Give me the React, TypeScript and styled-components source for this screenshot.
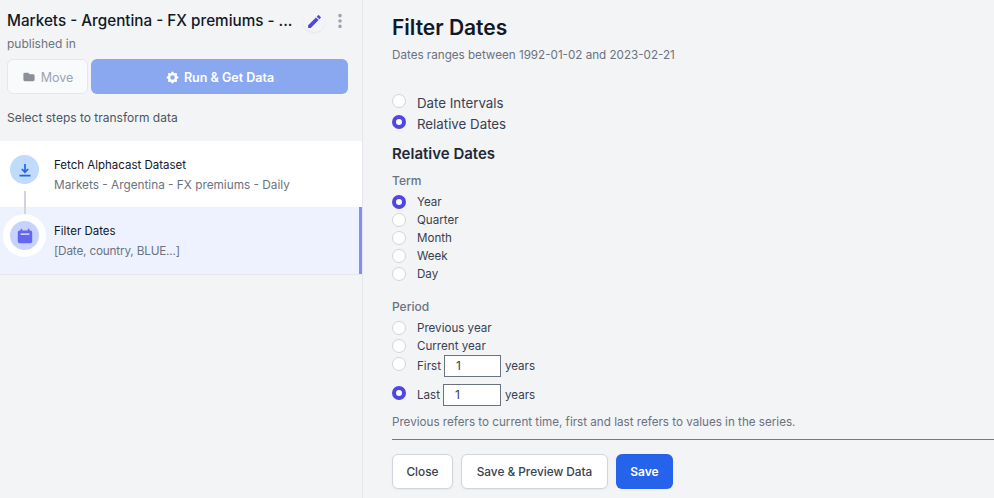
import React from "react"
import styled, { createGlobalStyle } from "styled-components"
import { HiFolder, HiCog, HiCalendar, HiDotsVertical } from "react-icons/hi"
import { MdEdit } from "react-icons/md"

const GlobalStyle = createGlobalStyle`
  html, body {
    margin: 0;
    padding: 0;
    height: 498px;
    overflow: hidden;
    background: #f3f4f6;
    font-family: Inter, "Liberation Sans", sans-serif;
  }
`

const App = () => {
  return (
    <Page>
      <GlobalStyle />
      <Sidebar>
        <TitleRow>
          <Title>Markets - Argentina - FX premiums - ...</Title>
          <EditButton>
            <MdEdit size={17} />
          </EditButton>
          <Dots>
            <HiDotsVertical size={18} />
          </Dots>
        </TitleRow>
        <Published>published in</Published>
        <Actions>
          <MoveButton>
            <HiFolder size={14} />
            Move
          </MoveButton>
          <RunButton>
            <HiCog size={15} />
            Run &amp; Get Data
          </RunButton>
        </Actions>
        <Hint>Select steps to transform data</Hint>
        <Steps>
          <Step>
            <StepIcon>
              <svg width="14" height="14" viewBox="0 0 14 14" fill="none" stroke="#2563eb" strokeWidth="1.7">
                <path d="M7 1v8M3.8 6 7 9.2 10.2 6M1.5 12.7h11" />
              </svg>
            </StepIcon>
            <div>
              <StepName>Fetch Alphacast Dataset</StepName>
              <StepDetail>Markets - Argentina - FX premiums - Daily</StepDetail>
            </div>
          </Step>
          <Connector />
          <Step $active>
            <StepIcon $active>
              <HiCalendar size={18} />
            </StepIcon>
            <div>
              <StepName>Filter Dates</StepName>
              <ColumnList>[Date, country, BLUE...]</ColumnList>
            </div>
          </Step>
        </Steps>
      </Sidebar>
      <Main>
        <Heading>Filter Dates</Heading>
        <Subheading>Dates ranges between 1992-01-02 and 2023-02-21</Subheading>
        <ModeGroup>
          <OptionRow $height={21}>
            <RaisedRadio />
            <ModeLabel>Date Intervals</ModeLabel>
          </OptionRow>
          <OptionRow $height={21}>
            <RaisedRadio $checked />
            <ModeLabel>Relative Dates</ModeLabel>
          </OptionRow>
        </ModeGroup>
        <SectionTitle>Relative Dates</SectionTitle>
        <FieldLabel>Term</FieldLabel>
        {["Year", "Quarter", "Month", "Week", "Day"].map((term, i) => (
          <OptionRow key={term} $height={18}>
            <Radio $checked={i === 0} />
            <OptionLabel>{term}</OptionLabel>
          </OptionRow>
        ))}
        <PeriodLabel>Period</PeriodLabel>
        <OptionRow $height={18}>
          <Radio />
          <OptionLabel>Previous year</OptionLabel>
        </OptionRow>
        <OptionRow $height={18}>
          <Radio />
          <OptionLabel>Current year</OptionLabel>
        </OptionRow>
        <InputRow>
          <RaisedRadio />
          <OptionLabel>First</OptionLabel>
          <NumberBox $width={57}>1</NumberBox>
          <Unit>years</Unit>
        </InputRow>
        <InputRow>
          <RaisedRadio $checked />
          <OptionLabel>Last</OptionLabel>
          <NumberBox $width={58}>1</NumberBox>
          <Unit>years</Unit>
        </InputRow>
        <Note>Previous refers to current time, first and last refers to values in the series.</Note>
        <Divider />
        <Footer>
          <OutlineButton $width={61}>Close</OutlineButton>
          <OutlineButton $width={147}>Save &amp; Preview Data</OutlineButton>
          <SaveButton>Save</SaveButton>
        </Footer>
      </Main>
    </Page>
  )
}

const Page = styled.div`
  display: flex;
  width: 994px;
  height: 498px;
  overflow: hidden;
  background: #f3f4f6;
`

const Sidebar = styled.aside`
  width: 363px;
  flex-shrink: 0;
  box-sizing: border-box;
  padding-top: 9px;
  border-right: 1px solid #e5e7eb;
`

const TitleRow = styled.div`
  display: flex;
  align-items: center;
  height: 24px;
  padding-left: 7px;
`

const Title = styled.h1`
  margin: 0;
  width: 296px;
  font-size: 15.25px;
  line-height: 24px;
  font-weight: 500;
  color: #111827;
  white-space: nowrap;
`

const EditButton = styled.span`
  display: flex;
  align-items: center;
  justify-content: center;
  width: 22px;
  height: 22px;
  border-radius: 50%;
  color: #4f46e5;
  box-shadow: 0 1px 2px rgba(0, 0, 0, 0.06);
`

const Dots = styled.span`
  display: flex;
  margin-left: 6px;
  color: #9ca3af;
`

const Published = styled.div`
  margin: 2px 0 0 7px;
  font-size: 12px;
  line-height: 18px;
  color: #6b7280;
`

const Actions = styled.div`
  display: flex;
  gap: 3px;
  margin: 6px 14px 0 7px;
`

const MoveButton = styled.div`
  display: flex;
  align-items: center;
  justify-content: center;
  gap: 5px;
  box-sizing: border-box;
  width: 81px;
  height: 35px;
  padding-top: 1px;
  border: 1px solid #e5e7eb;
  border-radius: 6px;
  background: #f9fafb;
  color: #9ca3af;
  font-size: 12.5px;
  font-weight: 400;

  svg {
    color: #8b8f97;
  }
`

const RunButton = styled.div`
  flex: 1;
  display: flex;
  align-items: center;
  justify-content: center;
  gap: 4px;
  box-sizing: border-box;
  height: 35px;
  padding-top: 1px;
  border-radius: 6px;
  background: #8aa8f0;
  color: #fff;
  font-size: 12.5px;
  font-weight: 600;
`

const Hint = styled.p`
  margin: 15px 0 0 7px;
  font-size: 12px;
  line-height: 18px;
  color: #4b5563;
`

const Steps = styled.div`
  position: relative;
  margin-top: 14px;
`

const Step = styled.div<{ $active?: boolean }>`
  display: flex;
  align-items: center;
  gap: 15px;
  box-sizing: border-box;
  height: ${(p) => (p.$active ? "68px" : "66px")};
  padding: ${(p) => (p.$active ? "0 0 0 10px" : "2px 0 0 10px")};
  background: ${(p) => (p.$active ? "#eef2ff" : "#fff")};
  border-bottom: ${(p) => (p.$active ? "1px solid #e5e7eb" : "none")};
  box-shadow: ${(p) => (p.$active ? "inset -3px 0 0 #818cf8" : "none")};
`

const StepIcon = styled.span<{ $active?: boolean }>`
  position: relative;
  z-index: 1;
  display: flex;
  align-items: center;
  justify-content: center;
  align-self: flex-start;
  width: 29px;
  height: 29px;
  margin-top: ${(p) => (p.$active ? "14px" : "12px")};
  flex-shrink: 0;
  border-radius: 50%;
  background: ${(p) => (p.$active ? "#c7d2fe" : "#bfdbfe")};
  color: #6366f1;
  box-shadow: ${(p) => (p.$active ? "0 0 0 7px #fff" : "none")};
`

const Connector = styled.span`
  position: absolute;
  left: 24px;
  top: 50px;
  width: 2px;
  height: 24px;
  background: #d1d5db;
`

const StepName = styled.div`
  font-size: 11.5px;
  line-height: 18px;
  color: #111827;
`

const StepDetail = styled.div`
  margin-top: 2px;
  font-size: 11.8px;
  line-height: 18px;
  color: #6b7280;
`

const ColumnList = styled(StepDetail)`
  letter-spacing: -0.2px;
`

const Main = styled.main`
  flex: 1;
  padding: 14px 0 0 29px;
  min-width: 0;
`

const Heading = styled.h2`
  margin: 0;
  font-size: 21px;
  line-height: 28px;
  font-weight: 600;
  color: #111827;
`

const Subheading = styled.p`
  margin: 4px 0 0;
  font-size: 11.65px;
  line-height: 18px;
  color: #6b7280;
`

const ModeGroup = styled.div`
  margin-top: 28px;
`

const OptionRow = styled.div<{ $height: number }>`
  display: flex;
  align-items: center;
  height: ${(p) => p.$height}px;
`

const Radio = styled.span<{ $checked?: boolean }>`
  box-sizing: border-box;
  width: 14px;
  height: 14px;
  flex-shrink: 0;
  border-radius: 50%;
  background: #fff;
  border: ${(p) => (p.$checked ? "4px solid #4f46e5" : "1px solid #d1d5db")};
`

const RaisedRadio = styled(Radio)`
  margin-bottom: 4px;
`

const ModeLabel = styled.span`
  margin-left: 11px;
  font-size: 13.3px;
  color: #374151;
`

const OptionLabel = styled.span`
  margin-left: 11px;
  font-size: 11.6px;
  color: #374151;
`

const SectionTitle = styled.h3`
  margin: 10px 0 0;
  font-size: 15px;
  line-height: 20px;
  font-weight: 600;
  color: #1f2937;
`

const FieldLabel = styled.div`
  margin: 9px 0 4px;
  font-size: 12px;
  line-height: 16px;
  font-weight: 500;
  color: #6b7280;
`

const PeriodLabel = styled(FieldLabel)`
  margin-top: 16px;
`

const InputRow = styled.div`
  display: flex;
  align-items: center;
  height: 22px;

  & + & {
    margin-top: 7px;
  }
`

const NumberBox = styled.span<{ $width: number }>`
  box-sizing: border-box;
  width: ${(p) => p.$width}px;
  height: 22px;
  margin: 0 4px 0 3px;
  padding-left: 11px;
  border: 1px solid #6b7280;
  background: #fff;
  font-size: 12px;
  line-height: 20px;
  color: #374151;
`

const Unit = styled.span`
  font-size: 11.6px;
  color: #374151;
`

const Note = styled.p`
  margin: 7px 0 0;
  font-size: 11.65px;
  line-height: 18px;
  color: #6b7280;
`

const Divider = styled.hr`
  margin: 8px 0 0;
  border: 0;
  height: 1px;
  background: #3f83d6;
`

const Footer = styled.div`
  display: flex;
  gap: 8px;
  margin-top: 14px;
`

const OutlineButton = styled.div<{ $width: number }>`
  display: flex;
  align-items: center;
  justify-content: center;
  box-sizing: border-box;
  width: ${(p) => p.$width}px;
  height: 35px;
  border: 1px solid #d1d5db;
  border-radius: 6px;
  background: #fff;
  color: #374151;
  font-size: 11.8px;
  font-weight: 500;
  box-shadow: 0 1px 2px rgba(0, 0, 0, 0.05);
`

const SaveButton = styled.div`
  display: flex;
  align-items: center;
  justify-content: center;
  width: 57px;
  height: 35px;
  border-radius: 6px;
  background: #2563eb;
  color: #fff;
  font-size: 12px;
  font-weight: 600;
`

export default App
